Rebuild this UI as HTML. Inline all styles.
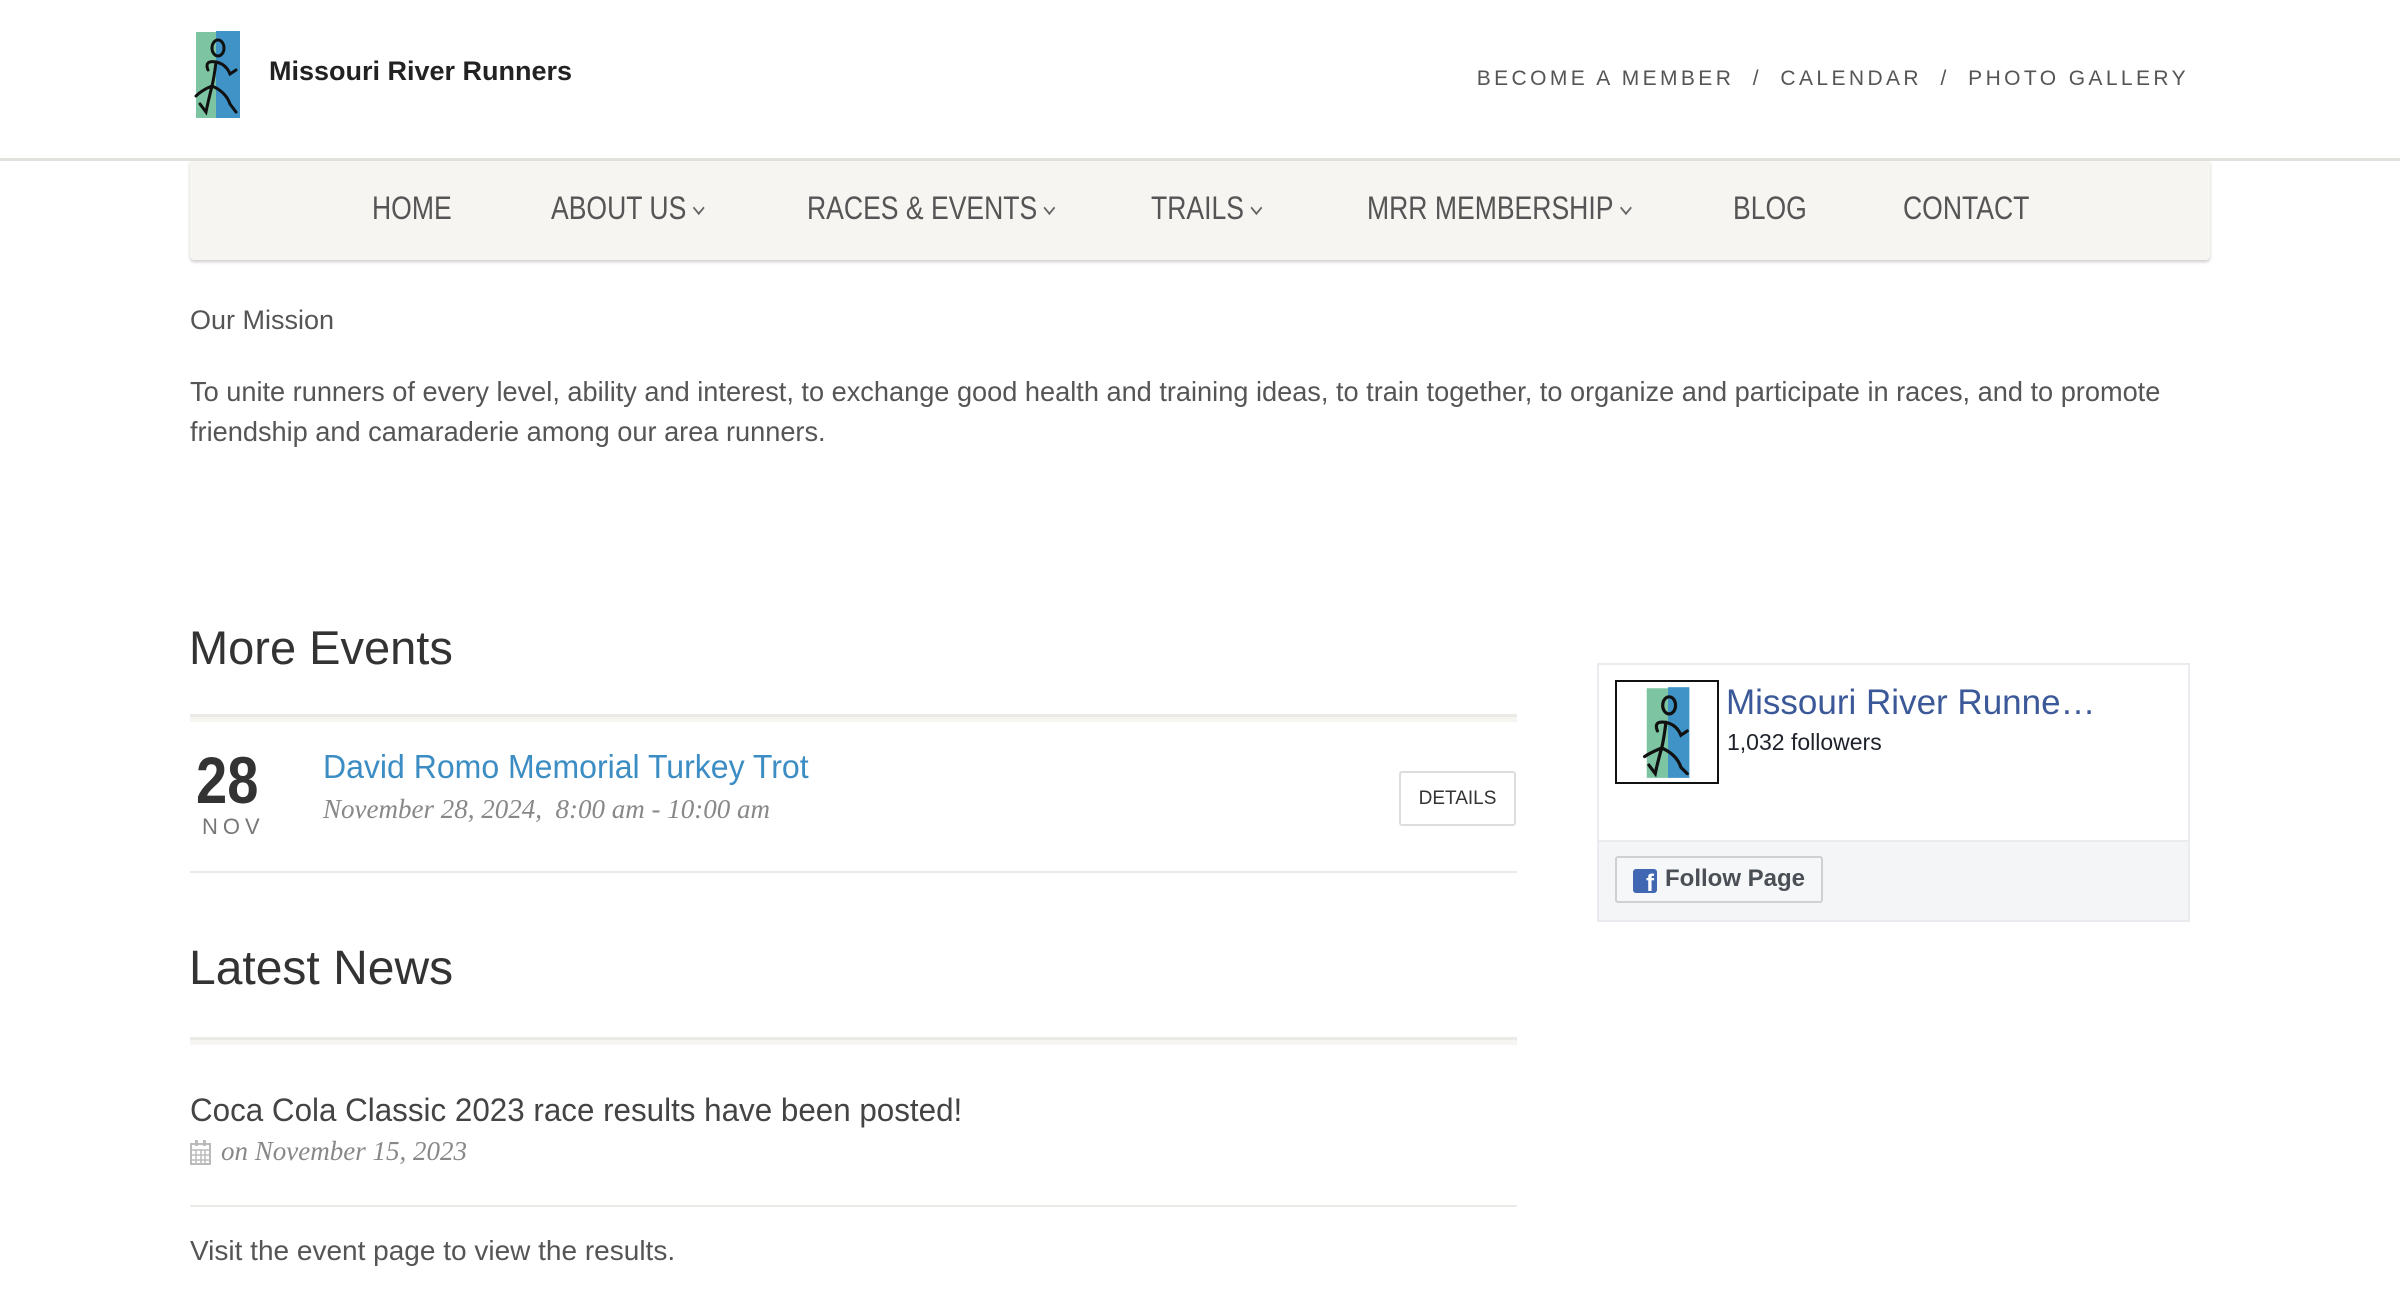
<!DOCTYPE html>
<html><head><meta charset="utf-8"><style>
*{margin:0;padding:0;box-sizing:border-box}
body{width:2400px;height:1298px;background:#fff;font-family:"Liberation Sans",sans-serif;color:#555;position:relative;overflow:hidden}
.a{position:absolute;white-space:nowrap}
.nav span{position:absolute;top:190px;font-size:32px;color:#555;transform:scaleX(.83);transform-origin:left top;letter-spacing:0}
.chev{display:inline-block;width:10px;height:10px;border-right:2px solid #666;border-bottom:2px solid #666;transform:rotate(45deg);margin-left:10px;vertical-align:6px}
.rule2{position:absolute;left:190px;width:1327px;height:8px;border-top:3px solid #ebeae6;background:#f6f5f2}
.rule{position:absolute;left:190px;width:1327px;height:2px;background:#ebeae6}
</style></head><body>

<svg class="a" style="left:188px;top:30px" width="62" height="90" viewBox="0 0 62 90">
<rect x="8" y="2" width="22" height="86" fill="#7cc4a2"/><rect x="28" y="1" width="24" height="87" fill="#3f93c6"/>
<g fill="none" stroke="#111" stroke-width="3" stroke-linecap="round">
<ellipse cx="30" cy="18" rx="6" ry="8"/><path d="M20 40 Q16 30 28 32 Q38 34 42 44 L48 40"/><path d="M28 32 Q26 48 24 56 Q14 60 8 66 M24 56 Q20 72 18 82 L12 74 M24 56 Q38 62 42 74 L48 82"/></g></svg>
<div class="a" style="left:269px;top:56px;font-size:27px;font-weight:bold;color:#222">Missouri River Runners</div>
<div class="a" style="right:211px;top:67px;font-size:21px;letter-spacing:3.4px;color:#555">BECOME A MEMBER &nbsp;/&nbsp; CALENDAR &nbsp;/&nbsp; PHOTO GALLERY</div>

<div class="a" style="left:0;top:158px;width:2400px;height:3px;background:#e2e1dd"></div>
<div class="a" style="left:190px;top:161px;width:2020px;height:99px;background:#f6f5f2;border-radius:0 0 4px 4px;box-shadow:0 2px 3px rgba(0,0,0,.2)"></div>
<div class="nav">
<span style="left:372px">HOME</span>
<span style="left:551px">ABOUT US<i class="chev"></i></span>
<span style="left:807px">RACES &amp; EVENTS<i class="chev"></i></span>
<span style="left:1151px">TRAILS<i class="chev"></i></span>
<span style="left:1367px">MRR MEMBERSHIP<i class="chev"></i></span>
<span style="left:1733px">BLOG</span>
<span style="left:1903px">CONTACT</span>
</div>

<div class="a" style="left:190px;top:305px;font-size:27px">Our Mission</div>
<div class="a" style="left:190px;top:372px;font-size:28px;line-height:40px;white-space:normal;width:2090px;transform:scaleX(.97);transform-origin:left top">To unite runners of every level, ability and interest, to exchange good health and training ideas, to train together, to organize and participate in races, and to promote friendship and camaraderie among our area runners.</div>

<div class="a" style="left:189px;top:620px;font-size:47px;color:#333">More Events</div>
<div class="rule2" style="top:714px"></div>
<div class="a" style="left:196px;top:742px;font-size:66px;font-weight:bold;color:#333;transform:scaleX(.85);transform-origin:left">28</div>
<div class="a" style="left:202px;top:814px;font-size:22px;letter-spacing:5px;color:#777">NOV</div>
<div class="a" style="left:323px;top:748px;font-size:33px;color:#3c8dc4;transform:scaleX(.97);transform-origin:left">David Romo Memorial Turkey Trot</div>
<div class="a" style="left:323px;top:794px;font-size:27px;font-style:italic;color:#888;font-family:'Liberation Serif',serif">November 28, 2024, &nbsp;8:00 am - 10:00 am</div>
<div class="a" style="left:1399px;top:771px;width:117px;height:55px;border:2px solid #ddd;border-radius:3px;font-size:19px;color:#333;text-align:center;line-height:51px">DETAILS</div>
<div class="rule" style="top:871px"></div>

<div class="a" style="left:189px;top:941px;font-size:48px;color:#333">Latest News</div>
<div class="rule2" style="top:1037px"></div>
<div class="a" style="left:190px;top:1092px;font-size:32px;color:#444;transform:scaleX(.98);transform-origin:left">Coca Cola Classic 2023 race results have been posted!</div>
<svg class="a" style="left:190px;top:1140px" width="21" height="25" viewBox="0 0 21 25"><rect x="1" y="4" width="19" height="20" fill="none" stroke="#bbb" stroke-width="2"/><path d="M1 10H20M1 15H20M1 20H20M6 10V24M11 10V24M15 10V24" stroke="#bbb" stroke-width="1.5"/><rect x="5" y="0" width="3" height="6" fill="#bbb"/><rect x="13" y="0" width="3" height="6" fill="#bbb"/></svg>
<div class="a" style="left:221px;top:1136px;font-size:27px;font-style:italic;color:#888;font-family:'Liberation Serif',serif">on November 15, 2023</div>
<div class="rule" style="top:1205px"></div>
<div class="a" style="left:190px;top:1235px;font-size:28px">Visit the event page to view the results.</div>

<div class="a" style="left:1597px;top:663px;width:593px;height:259px;border:2px solid #e9ebee;background:#fff"></div>
<div class="a" style="left:1599px;top:840px;width:589px;height:80px;background:#f4f5f7;border-top:2px solid #e9ebee"></div>
<div class="a" style="left:1615px;top:680px;width:104px;height:104px;border:2px solid #111;background:#fff"></div>
<svg class="a" style="left:1627px;top:684px" width="80" height="96" viewBox="0 0 62 90">
<rect x="12" y="4" width="22" height="84" fill="#7cc4a2"/><rect x="32" y="3" width="20" height="85" fill="#3f93c6"/>
<g fill="none" stroke="#111" stroke-width="3" stroke-linecap="round">
<ellipse cx="33" cy="20" rx="6" ry="8"/><path d="M22 44 Q18 34 30 36 Q40 38 44 48 L50 44"/><path d="M30 36 Q28 52 26 60 Q16 64 10 68 M26 60 Q22 74 20 84 L14 76 M26 60 Q40 66 44 78 L50 84"/></g></svg>
<div class="a" style="left:1726px;top:683px;font-size:35px;color:#3b5998">Missouri River Runne…</div>
<div class="a" style="left:1727px;top:729px;font-size:23px;color:#1d2129">1,032 followers</div>
<div class="a" style="left:1615px;top:856px;width:208px;height:47px;border:2px solid #ced0d4;border-radius:3px;background:#f6f7f9"></div>
<div class="a" style="left:1633px;top:869px;width:24px;height:24px;background:#4267b2;border-radius:3px;color:#fff;font-weight:bold;font-size:24px;line-height:30px;text-align:right;padding-right:3px;overflow:hidden">f</div>
<div class="a" style="left:1665px;top:865px;font-size:24px;font-weight:bold;color:#4b4f56">Follow Page</div>
</body></html>
